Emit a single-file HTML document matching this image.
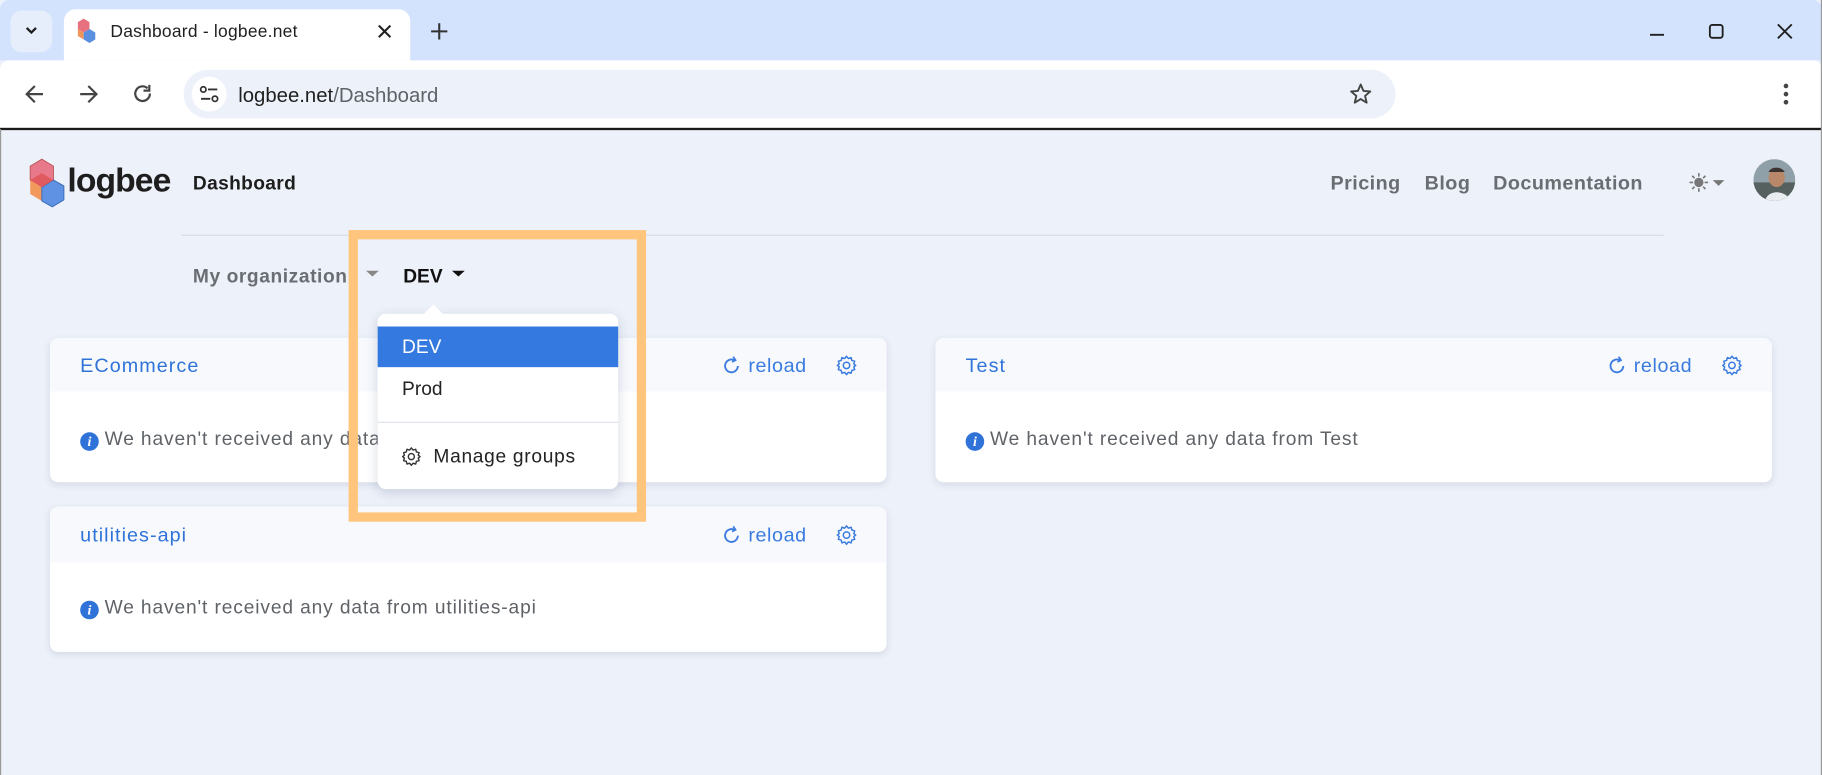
<!DOCTYPE html>
<html><head><meta charset="utf-8"><style>
html,body{margin:0;padding:0;width:1822px;height:775px;overflow:hidden;background:#fff}
#w{position:absolute;left:0;top:0;width:1568px;height:667px;transform:scale(1.16199,1.16192);transform-origin:0 0;font-family:"Liberation Sans",sans-serif;background:#edf1f9;overflow:hidden}
.a{position:absolute}
.t{position:absolute;white-space:nowrap}
.card{position:absolute;background:#fff;border-radius:7px;box-shadow:0 2px 6px rgba(40,60,100,.12);overflow:hidden}
.card .h{height:46px;background:#f7f9fd}
.ct{position:absolute;left:26px;top:14px;font-size:17px;color:#2f73d9;letter-spacing:.9px}
.rl{position:absolute;top:14px;font-size:17px;color:#3a7be0;letter-spacing:.5px}
.msg{position:absolute;left:26px;font-size:16.5px;color:#5f6368;letter-spacing:.75px}
.ii{display:inline-block;width:16px;height:16px;border-radius:50%;background:#2f73d9;color:#fff;font:italic bold 12px/16px "Liberation Serif",serif;text-align:center;vertical-align:-1px;margin-right:5px;letter-spacing:0}
.nav{position:absolute;top:148px;font-size:17px;font-weight:bold;color:#6a6d72;letter-spacing:.4px}
</style></head><body><div id="w">
<div class="a" style="left:0;top:0;width:1568px;height:52px;background:#d3e3fd;border-radius:8px 8px 0 0"></div>
<div class="a" style="left:9px;top:9px;width:36px;height:36px;border-radius:10px;background:#e6eefb"></div>
<svg class="a" style="left:19px;top:20px" width="16" height="12"><path d="M4 4l4 4 4-4" stroke="#1f1f1f" stroke-width="2" fill="none"/></svg>
<div class="a" style="left:55px;top:8px;width:298px;height:44px;background:#fff;border-radius:10px 10px 0 0"></div>
<svg class="a" style="left:64px;top:16px" width="20" height="24" viewBox="0 0 20 24"><path d="M3 3l5-3 5 3v6l-5 3-5-3z" fill="#e8717f"/><path d="M3 9l5 3v6l-5-3z" fill="#f0945a"/><path d="M8 12l5-3 5 3v6l-5 3-5-3z" fill="#5b8fe0"/></svg>
<div class="t" style="left:95px;top:19px;font-size:15px;color:#1f1f1f;letter-spacing:.2px">Dashboard - logbee.net</div>
<svg class="a" style="left:324px;top:20px" width="14" height="14"><path d="M2 2l10 10M12 2L2 12" stroke="#1f1f1f" stroke-width="1.8"/></svg>
<svg class="a" style="left:370px;top:19px" width="16" height="16"><path d="M8 1v14M1 8h14" stroke="#333" stroke-width="1.8"/></svg>
<svg class="a" style="left:1418px;top:20px" width="16" height="16"><path d="M2 10h12" stroke="#1f1f1f" stroke-width="1.6"/></svg>
<svg class="a" style="left:1469px;top:19px" width="16" height="16"><rect x="2.5" y="2.5" width="11" height="11" rx="2" stroke="#1f1f1f" stroke-width="1.6" fill="none"/></svg>
<svg class="a" style="left:1528px;top:19px" width="16" height="16"><path d="M2 2l12 12M14 2L2 14" stroke="#1f1f1f" stroke-width="1.6"/></svg>
<div class="a" style="left:0;top:52px;width:1568px;height:59px;background:#fff;border-radius:8px 8px 0 0"></div>
<svg class="a" style="left:20px;top:71px" width="20" height="20"><path d="M17 10H4M10 3l-7 7 7 7" stroke="#444" stroke-width="1.9" fill="none"/></svg>
<svg class="a" style="left:66px;top:71px" width="20" height="20"><path d="M3 10h13M10 3l7 7-7 7" stroke="#444" stroke-width="1.9" fill="none"/></svg>
<svg class="a" style="left:113px;top:71px" width="20" height="20"><path d="M16 9.5A6.3 6.3 0 1 1 14 5" stroke="#444" stroke-width="1.9" fill="none"/><path d="M15.5 2v5h-5" stroke="#444" stroke-width="1.9" fill="none"/></svg>
<div class="a" style="left:158px;top:60px;width:1043px;height:42px;background:#edf2fa;border-radius:21px"></div>
<div class="a" style="left:165px;top:66px;width:30px;height:30px;background:#fff;border-radius:50%"></div>
<svg class="a" style="left:170px;top:71px" width="20" height="20"><circle cx="5" cy="6" r="2.3" stroke="#333" stroke-width="1.5" fill="none"/><path d="M9 6h8M3 14h8" stroke="#333" stroke-width="1.6"/><circle cx="15" cy="14" r="2.3" stroke="#333" stroke-width="1.5" fill="none"/></svg>
<div class="t" style="left:205px;top:72px;font-size:17.5px;color:#1f1f1f">logbee.net<span style="color:#5f6368">/Dashboard</span></div>
<svg class="a" style="left:1160px;top:70px" width="22" height="22" viewBox="0 0 24 24"><path d="M12 3l2.6 6 6.4.5-4.9 4.2 1.5 6.3L12 16.6 6.4 20l1.5-6.3L3 9.5 9.4 9z" stroke="#444" stroke-width="1.8" fill="none" stroke-linejoin="round"/></svg>
<svg class="a" style="left:1532px;top:70px" width="10" height="22"><circle cx="5" cy="4" r="2" fill="#444"/><circle cx="5" cy="11" r="2" fill="#444"/><circle cx="5" cy="18" r="2" fill="#444"/></svg>
<div class="a" style="left:0;top:110px;width:1568px;height:1.5px;background:#1a1a1a"></div>
<div class="a" style="left:0;top:111px;width:1px;height:556px;background:#999"></div>
<div class="a" style="left:1567px;top:0;width:1px;height:667px;background:#999"></div>
<svg class="a" style="left:22px;top:135px" width="34" height="45" viewBox="0 0 34 45"><path d="M4 8l10-6 10 6v12l-10 6-10-6z" fill="#e8798a" stroke="#b55" stroke-width=".8"/><path d="M4 20l10 6v12l-10-6z" fill="#f2995d"/><path d="M14 26l10-6 9 5v12l-10 6-9-5z" fill="#5f92e2" stroke="#3a6ab8" stroke-width=".8"/><path d="M4 20l10-6 10 6-10 6z" fill="#e15a5f"/></svg>
<div class="t" style="left:58px;top:140px;font-size:29px;font-weight:bold;color:#1e1e1e;letter-spacing:-.8px">logbee</div>
<div class="t" style="left:166px;top:149px;font-size:16.5px;font-weight:bold;color:#1e1e1e;letter-spacing:.3px">Dashboard</div>
<div class="nav" style="left:1145px">Pricing</div>
<div class="nav" style="left:1226px">Blog</div>
<div class="nav" style="left:1285px">Documentation</div>
<svg class="a" style="left:1452px;top:147px" width="34" height="20"><g stroke="#777" stroke-width="1.4"><path d="M10 2v3M10 15v3M2 10h3M15 10h3M4.3 4.3l2 2M13.7 13.7l2 2M4.3 15.7l2-2M13.7 6.3l2-2"/></g><circle cx="10" cy="10" r="4" fill="#777"/><path d="M22 8h10l-5 5z" fill="#777"/></svg>
<svg class="a" style="left:1509px;top:137px" width="36" height="36"><defs><clipPath id="c"><circle cx="18" cy="18" r="18"/></clipPath></defs><g clip-path="url(#c)"><rect width="36" height="36" fill="#8fa0a8"/><rect y="20" width="36" height="16" fill="#55605f"/><path d="M10 36c2-10 18-10 22 0z" fill="#e9edf0"/><ellipse cx="20" cy="16" rx="7" ry="8" fill="#b9876a"/><path d="M13 11c2-5 11-5 14 0z" fill="#3b3430"/></g></svg>
<div class="a" style="left:156px;top:202px;width:1276px;height:1px;background:#d6dce8"></div>
<div class="t" style="left:166px;top:229px;font-size:16.5px;font-weight:bold;color:#6a6d72;letter-spacing:.5px">My organization</div>
<svg class="a" style="left:314px;top:231px" width="14" height="10"><path d="M1 2h11l-5.5 5z" fill="#888"/></svg>
<div class="t" style="left:347px;top:229px;font-size:16.5px;font-weight:bold;color:#111">DEV</div>
<svg class="a" style="left:388px;top:231px" width="14" height="10"><path d="M1 2h11l-5.5 5z" fill="#111"/></svg>
<div class="card" style="left:43px;top:291px;width:720px;height:124px"><div class="h"></div>
<div class="ct">ECommerce</div>
<svg class="a" style="left:579px;top:15px" width="16" height="17"><path d="M13 9a5.5 5.5 0 1 1-3-5" stroke="#3a7be0" stroke-width="1.6" fill="none"/><path d="M9 1l2 3-3 1.5" stroke="#3a7be0" stroke-width="1.5" fill="none"/></svg>
<div class="rl" style="left:601px">reload</div>
<svg class="a" style="left:676px;top:14px" width="19" height="19" viewBox="0 0 24 24"><path d="M12 2l2 2.5 3-1 .8 3.1 3.1.8-1 3 2.1 1.6-2.1 1.6 1 3-3.1.8-.8 3.1-3-1L12 22l-2-2.5-3 1-.8-3.1-3.1-.8 1-3L2 12l2.1-1.6-1-3 3.1-.8.8-3.1 3 1z" stroke="#3a7be0" stroke-width="1.6" fill="none" stroke-linejoin="round"/><circle cx="12" cy="12" r="3.5" stroke="#3a7be0" stroke-width="1.6" fill="none"/></svg>
<div class="msg" style="top:78px"><span class="ii">i</span>We haven't received any data from ECommerce</div></div>
<div class="card" style="left:805px;top:291px;width:720px;height:124px"><div class="h"></div>
<div class="ct">Test</div>
<svg class="a" style="left:579px;top:15px" width="16" height="17"><path d="M13 9a5.5 5.5 0 1 1-3-5" stroke="#3a7be0" stroke-width="1.6" fill="none"/><path d="M9 1l2 3-3 1.5" stroke="#3a7be0" stroke-width="1.5" fill="none"/></svg>
<div class="rl" style="left:601px">reload</div>
<svg class="a" style="left:676px;top:14px" width="19" height="19" viewBox="0 0 24 24"><path d="M12 2l2 2.5 3-1 .8 3.1 3.1.8-1 3 2.1 1.6-2.1 1.6 1 3-3.1.8-.8 3.1-3-1L12 22l-2-2.5-3 1-.8-3.1-3.1-.8 1-3L2 12l2.1-1.6-1-3 3.1-.8.8-3.1 3 1z" stroke="#3a7be0" stroke-width="1.6" fill="none" stroke-linejoin="round"/><circle cx="12" cy="12" r="3.5" stroke="#3a7be0" stroke-width="1.6" fill="none"/></svg>
<div class="msg" style="top:78px"><span class="ii">i</span>We haven't received any data from Test</div></div>
<div class="card" style="left:43px;top:436px;width:720px;height:125px"><div class="h" style="height:48px"></div>
<div class="ct" style="top:15px">utilities-api</div>
<svg class="a" style="left:579px;top:16px" width="16" height="17"><path d="M13 9a5.5 5.5 0 1 1-3-5" stroke="#3a7be0" stroke-width="1.6" fill="none"/><path d="M9 1l2 3-3 1.5" stroke="#3a7be0" stroke-width="1.5" fill="none"/></svg>
<div class="rl" style="left:601px;top:15px">reload</div>
<svg class="a" style="left:676px;top:15px" width="19" height="19" viewBox="0 0 24 24"><path d="M12 2l2 2.5 3-1 .8 3.1 3.1.8-1 3 2.1 1.6-2.1 1.6 1 3-3.1.8-.8 3.1-3-1L12 22l-2-2.5-3 1-.8-3.1-3.1-.8 1-3L2 12l2.1-1.6-1-3 3.1-.8.8-3.1 3 1z" stroke="#3a7be0" stroke-width="1.6" fill="none" stroke-linejoin="round"/><circle cx="12" cy="12" r="3.5" stroke="#3a7be0" stroke-width="1.6" fill="none"/></svg>
<div class="msg" style="top:78px"><span class="ii">i</span>We haven't received any data from utilities-api</div></div>
<div class="a" style="left:300px;top:198px;width:240px;height:235px;border:8px solid #ffc57d"></div>
<div class="a" style="left:325px;top:270px;width:207px;height:151px;background:#fff;border-radius:7px;box-shadow:0 3px 10px rgba(40,60,100,.18)"></div>
<div class="a" style="left:364px;top:262px;width:0;height:0;border-left:9px solid transparent;border-right:9px solid transparent;border-bottom:9px solid #fff"></div>
<div class="a" style="left:325px;top:281px;width:207px;height:35px;background:#3479e0"></div>
<div class="t" style="left:346px;top:290px;font-size:16.5px;color:#fff">DEV</div>
<div class="t" style="left:346px;top:326px;font-size:16.5px;color:#222">Prod</div>
<div class="a" style="left:325px;top:363px;width:207px;height:1px;background:#dfe3ea"></div>
<svg class="a" style="left:345px;top:384px" width="18" height="18" viewBox="0 0 24 24"><path d="M12 2l2 2.5 3-1 .8 3.1 3.1.8-1 3 2.1 1.6-2.1 1.6 1 3-3.1.8-.8 3.1-3-1L12 22l-2-2.5-3 1-.8-3.1-3.1-.8 1-3L2 12l2.1-1.6-1-3 3.1-.8.8-3.1 3 1z" stroke="#333" stroke-width="1.6" fill="none" stroke-linejoin="round"/><circle cx="12" cy="12" r="3.5" stroke="#333" stroke-width="1.6" fill="none"/></svg>
<div class="t" style="left:373px;top:384px;font-size:16.5px;color:#222;letter-spacing:.6px">Manage groups</div>
</div></body></html>
